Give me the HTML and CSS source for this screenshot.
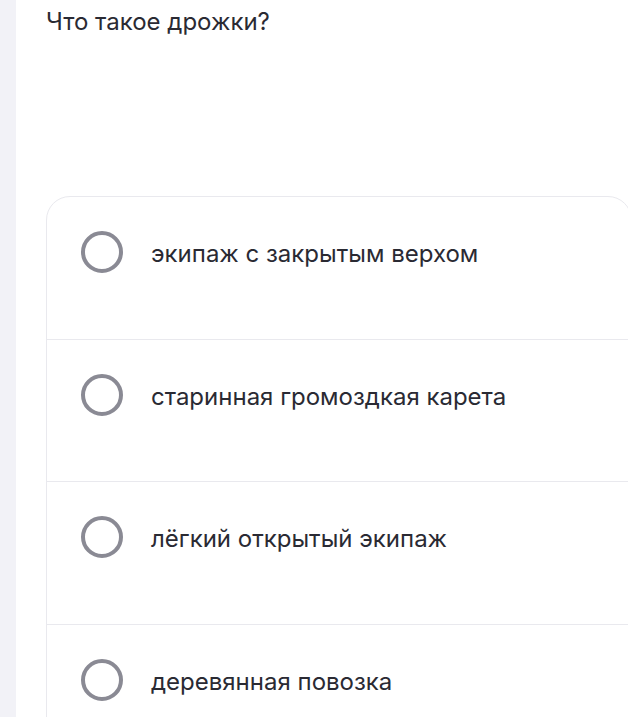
FILE: index.html
```html
<!DOCTYPE html>
<html lang="ru">
<head>
    <meta charset="UTF-8">
    <meta name="viewport" content="width=device-width, initial-scale=1.0">
    <title>Вопрос</title>
    <link rel="stylesheet" href="styles.css">
</head>
<body>
    <div class="page">
        <aside class="sidebar"></aside>

        <main class="content">
            <h1 class="question">Что такое дрожки?</h1>

            <!-- Варианты ответа -->
            <ul class="answers">
                <li class="answer">
                    <span class="radio"></span>
                    <span class="answer-text">экипаж с закрытым верхом</span>
                </li>
                <li class="answer">
                    <span class="radio"></span>
                    <span class="answer-text">старинная громоздкая карета</span>
                </li>
                <li class="answer">
                    <span class="radio"></span>
                    <span class="answer-text">лёгкий открытый экипаж</span>
                </li>
                <li class="answer">
                    <span class="radio"></span>
                    <span class="answer-text">деревянная повозка</span>
                </li>
            </ul>
        </main>
    </div>
</body>
</html>
```

FILE: styles.css
```css
html,
body {
    margin: 0;
    padding: 0;
    height: 100%;
    overflow: hidden;
}

body {
    background-color: #ffffff;
    font-family: Inter, 'Noto Sans', sans-serif;
    color: #2a2a33;
}

.page {
    display: flex;
    height: 100%;
    overflow: hidden;
}

.sidebar {
    flex: 0 0 16px;
    background-color: #f2f2f7;
}

.content {
    flex: 1;
    padding-left: 30px;
    min-width: 0;
}

.question {
    margin: 0;
    padding-top: 7px;
    font-size: 24px;
    font-weight: 400;
    line-height: 30px;
    height: 189px;
}

.answers {
    list-style: none;
    margin: 0;
    padding: 0;
    width: 584px;
    border: 1px solid #e9e9ee;
    border-radius: 24px;
}

.answer {
    display: flex;
    align-items: flex-start;
    gap: 28px;
    height: 107.5px;
    padding: 34px 0 0 34px;
    border-bottom: 1px solid #e9e9ee;
}

.answer:last-child {
    border-bottom: none;
}

.radio {
    flex: 0 0 auto;
    width: 34px;
    height: 34px;
    border: 4px solid #8a8a94;
    border-radius: 50%;
}

.answer-text {
    font-size: 24px;
    line-height: 30px;
    padding-top: 8px;
}
```
